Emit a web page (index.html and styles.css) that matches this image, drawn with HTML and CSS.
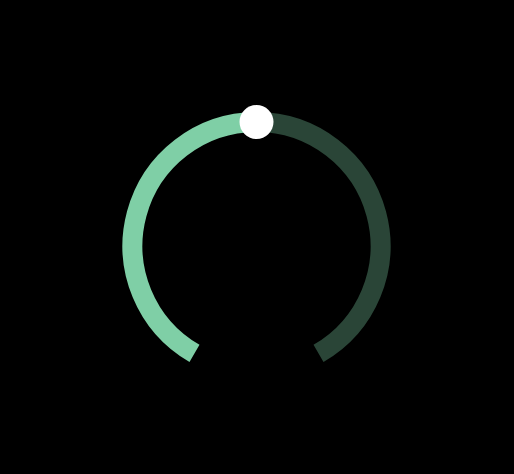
FILE: index.html
```html
<!DOCTYPE html>
<html lang="en">
<head>
<meta charset="utf-8">
<title>Dial</title>
<link rel="stylesheet" href="styles.css">
</head>
<body>
<div class="stage">
  <svg class="dial" width="514" height="474" viewBox="0 0 514 474" role="slider" aria-valuemin="0" aria-valuemax="100" aria-valuenow="50">
    <path class="track" d="M256.5 122 A124 124 0 0 1 318.5 353.4"/>
    <path class="fill" d="M194.5 353.4 A124 124 0 0 1 256.5 122"/>
    <circle class="knob" cx="256.5" cy="122" r="17"/>
  </svg>
</div>
</body>
</html>
```
FILE: styles.css
```css
html, body {
  margin: 0;
  padding: 0;
  background: #000;
}
.stage {
  width: 514px;
  height: 474px;
  background: #000;
}
.dial {
  display: block;
}
.track {
  fill: none;
  stroke: #2a4537;
  stroke-width: 20;
  stroke-linecap: butt;
}
.fill {
  fill: none;
  stroke: #7fcfa6;
  stroke-width: 20;
  stroke-linecap: butt;
}
.knob {
  fill: #fff;
}
```
